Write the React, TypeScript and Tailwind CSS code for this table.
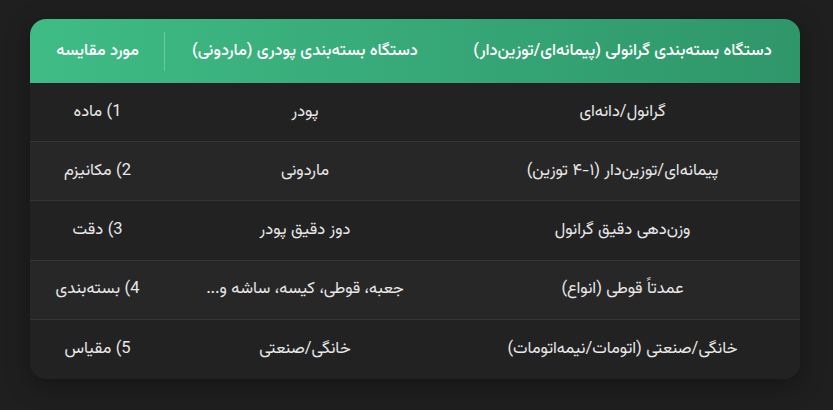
import React from "react";

const rows: [string, string, string, string][] = [
  ["1", "ماده", "پودر", "گرانول/دانه‌ای"],
  ["2", "مکانیزم", "ماردونی", "پیمانه‌ای/توزین‌دار (۱-۴ توزین)"],
  ["3", "دقت", "دوز دقیق پودر", "وزن‌دهی دقیق گرانول"],
  ["4", "بسته‌بندی", "جعبه، قوطی، کیسه، ساشه و...", "عمدتاً قوطی (انواع)"],
  ["5", "مقیاس", "خانگی/صنعتی", "خانگی/صنعتی (اتومات/نیمه‌اتومات)"],
];

export default function App() {
  return (
    <div
      className="w-[833px] h-[410px] bg-[#1f1f1f] pt-[19px] pl-[30px]"
      style={{ fontFamily: '"Vazirmatn", "Noto Sans Arabic", "DejaVu Sans", sans-serif' }}
    >
      <div className="w-[770px] rounded-2xl overflow-hidden bg-[#222222] shadow-[0_6px_24px_rgba(0,0,0,0.35)]" dir="rtl">
        <div className="grid grid-cols-[355px_280px_135px] h-[64px] bg-gradient-to-l from-[#2f966a] to-[#3fbc86] text-white text-[16.5px] font-medium">
          <div className="flex items-center justify-center">دستگاه بسته‌بندی گرانولی (پیمانه‌ای/توزین‌دار)</div>
          <div className="flex items-center justify-center">دستگاه بسته‌بندی پودری (ماردونی)</div>
          <div className="flex items-center justify-center relative">
            <span className="absolute right-0 top-[13px] bottom-[12px] w-px bg-white/25" />
            مورد مقایسه
          </div>
        </div>
        {rows.map((r, i) => (
          <div
            key={i}
            className={
              "grid grid-cols-[355px_280px_135px] h-[59.2px] text-[16.5px] text-[#e8e8e8] " +
              (i % 2 === 1 ? "bg-[#272727] " : "bg-[#222222] ") +
              (i < rows.length - 1 ? "border-b border-[#343434]" : "")
            }
          >
            <div className="flex items-center justify-center">{r[3]}</div>
            <div className="flex items-center justify-center">{r[2]}</div>
            <div className="flex items-center justify-center">
              <span dir="ltr">
                <bdi>{r[1]}</bdi> ({r[0]}
              </span>
            </div>
          </div>
        ))}
      </div>
    </div>
  );
}
